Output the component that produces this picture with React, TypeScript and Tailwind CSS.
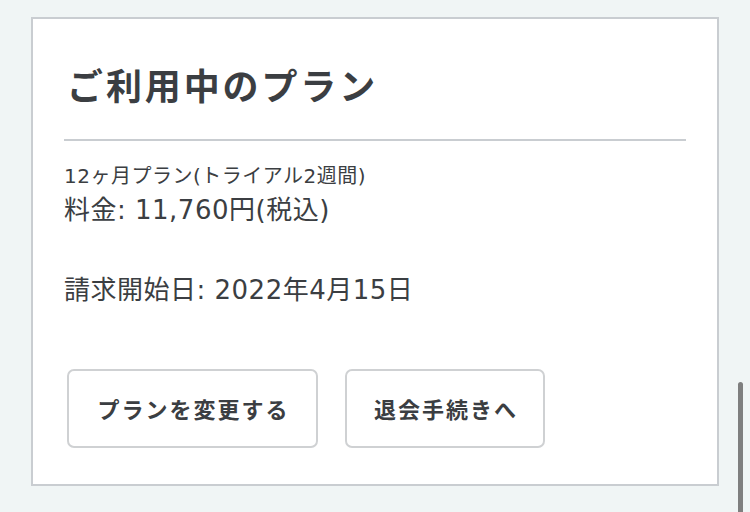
const latin = { fontFamily: '"DejaVu Sans", "Noto Sans CJK JP", sans-serif' };

export default function App() {
  return (
    <div
      className="relative h-[512px] w-[750px] overflow-hidden bg-[#f0f5f5] pt-[17px] pl-[31px]"
      style={{ fontFamily: '"Noto Sans CJK JP", "Noto Sans", sans-serif' }}
    >
      <section className="flex h-[469px] w-[688px] flex-col border-2 border-[#c9cdd1] bg-white px-[31px] text-[#3b3e42]">
        <h2 className="mt-[43px] pl-[3px] text-[36px] font-bold leading-[44px] tracking-[0.08em]">
          ご利用中のプラン
        </h2>

        <hr className="mt-[33px] border-t-2 border-[#c9cdd1]" />

        <div className="mt-[22px] flex flex-col" style={latin}>
          <p className="text-[20px] leading-[26px] tracking-[0.5px]">12ヶ月プラン(トライアル2週間)</p>
          <p className="mt-[4px] text-[26px] leading-[34px] tracking-[0.5px]">料金: 11,760円(税込)</p>
          <p className="mt-[46px] text-[26px] leading-[34px] tracking-[0.5px]">請求開始日: 2022年4月15日</p>
        </div>

        <div className="mt-[62px] flex gap-[27px] pl-[3px]">
          <button
            type="button"
            className="h-[79px] w-[251px] rounded-[7px] border-2 border-[#cfd1d3] bg-white pl-[2px] text-[22px] font-bold tracking-[2px] text-[#3b3e42]"
          >
            プランを変更する
          </button>
          <button
            type="button"
            className="h-[79px] w-[200px] rounded-[7px] border-2 border-[#cfd1d3] bg-white pl-[2px] text-[22px] font-bold tracking-[2px] text-[#3b3e42]"
          >
            退会手続きへ
          </button>
        </div>
      </section>

      <div className="absolute right-[7px] top-[382px] h-[140px] w-[5px] rounded-full bg-[#7f7f7f]" />
    </div>
  );
}
